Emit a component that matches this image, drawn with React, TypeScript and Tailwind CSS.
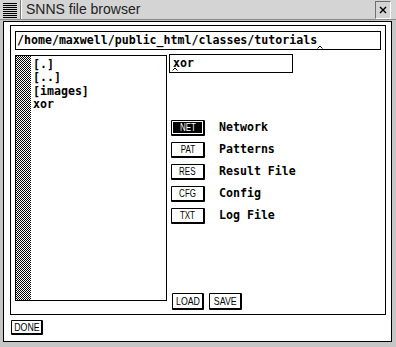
import React from "react";

const MONO = { fontFamily: "'DejaVu Sans Mono', 'Liberation Mono', monospace" };
const SANS = { fontFamily: "'Liberation Sans', Arial, sans-serif" };

const FILES = ["[.]", "[..]", "[images]", "xor"];

const TYPES = [
  { tag: "NET", label: "Network", active: true },
  { tag: "PAT", label: "Patterns" },
  { tag: "RES", label: "Result File" },
  { tag: "CFG", label: "Config" },
  { tag: "TXT", label: "Log File" },
];

function Caret() {
  return (
    <svg width="6" height="4" viewBox="0 0 6 4" className="block">
      <polyline points="0.5,3.5 3,1 5.5,3.5" fill="none" stroke="#000" strokeWidth="1" />
    </svg>
  );
}

// 50% stipple used by the Athena scrollbar
function Stipple() {
  return (
    <svg width="15" height="244" className="block" shapeRendering="crispEdges">
      <defs>
        <pattern id="stip" width="2" height="2" patternUnits="userSpaceOnUse">
          <rect x="0" y="0" width="2" height="2" fill="#fff" />
          <rect x="0" y="0" width="1" height="1" fill="#000" />
          <rect x="1" y="1" width="1" height="1" fill="#000" />
        </pattern>
      </defs>
      <rect width="15" height="244" fill="url(#stip)" />
    </svg>
  );
}

function SmallButton({
  children,
  w,
  h,
  active,
  size = "text-[11px]",
}: {
  children: React.ReactNode;
  w: string;
  h: string;
  active?: boolean;
  size?: string;
}) {
  return (
    <div
      className={`${w} ${h} flex items-center justify-center border-l border-t border-r-2 border-b-2 border-black rounded-[1px] ${
        active ? "bg-black text-white shadow-[inset_0_0_0_1px_#fff]" : "bg-white text-black"
      }`}
    >
      <span className={`inline-block scale-x-[0.8] ${size} leading-none`} style={SANS}>
        {children}
      </span>
    </div>
  );
}

export default function App() {
  return (
    <div className="w-[396px] h-[347px] bg-[#c6c6c6] flex flex-col overflow-hidden select-none">
      {/* title bar */}
      <div className="h-[20px] flex items-stretch bg-[#d4d4d4] border-b border-[#8a8a8a]">
        <div className="w-[22px] flex items-start pl-[3px] pt-[3px] border-r border-white shadow-[inset_-1px_0_0_#7a7a7a]">
          <svg width="14" height="16" viewBox="0 0 14 16" className="block">
            {[0, 2, 4, 6, 8, 10, 12, 14].map((y) => (
              <line key={y} x1="0" x2="14" y1={y + 0.5} y2={y + 0.5} stroke="#000" strokeWidth="1" />
            ))}
          </svg>
        </div>
        <div className="flex-1 pl-[4px] text-[14px] leading-[19px] text-[#222]" style={SANS}>
          SNNS file browser
        </div>
        <div className="w-[16px] h-[18px] mt-[1px] mr-[5px] flex items-center justify-center bg-[#d4d4d4] border-l border-t border-[#6e6e6e] border-r border-b border-r-white border-b-white">
          <svg width="8" height="8" viewBox="0 0 8 8" className="block">
            <path d="M1 1 L7 7 M7 1 L1 7" stroke="#000" strokeWidth="1.4" />
          </svg>
        </div>
      </div>

      {/* window body */}
      <div className="flex-1 flex pl-[3px] pr-[4px] pb-[5px] pt-[1px]">
        <div className="flex-1 border border-black bg-white flex flex-col pl-[6px] pr-[5px] pt-[3px]">
          <div className="h-[290px] border border-black flex flex-col px-[4px] pt-[5px]">
            {/* path field */}
            <div className="h-[19px] border border-black flex items-center pl-[1px] text-[11.6px] font-bold leading-none" style={MONO}>
              <span>/home/maxwell/public_html/classes/tutorials</span>
              <span className="self-end">
                <Caret />
              </span>
            </div>

            <div className="flex mt-[5px]">
              {/* file list */}
              <div className="w-[152px] h-[246px] border border-black flex">
                <Stipple />
                <div className="pl-[2px] pt-[2px] text-[11.6px] font-bold leading-[13.3px]" style={MONO}>
                  {FILES.map((f) => (
                    <div key={f}>{f}</div>
                  ))}
                </div>
              </div>

              {/* right side */}
              <div className="flex flex-col -mt-px">
                <div className="relative ml-[2px] w-[124px] h-[19px] border border-black flex items-center pl-[3px] text-[11.6px] font-bold leading-none" style={MONO}>
                  xor
                  <span className="absolute left-[2px] bottom-[1px]">
                    <Caret />
                  </span>
                </div>

                <div className="flex flex-col gap-[6px] mt-[47px] ml-[4px]">
                  {TYPES.map((t) => (
                    <div key={t.tag} className="flex items-center">
                      <SmallButton w="w-[34px]" h="h-[16px]" active={t.active} size="text-[10px]">
                        {t.tag}
                      </SmallButton>
                      <span className="ml-[14px] text-[11.6px] font-bold leading-none" style={MONO}>
                        {t.label}
                      </span>
                    </div>
                  ))}
                </div>

                <div className="flex gap-[5px] mt-[69px] ml-[5px]">
                  <SmallButton w="w-[32px]" h="h-[17px]">LOAD</SmallButton>
                  <SmallButton w="w-[33px]" h="h-[17px]">SAVE</SmallButton>
                </div>
              </div>
            </div>
          </div>

          <div className="mt-[5px] ml-[1px]">
            <SmallButton w="w-[32px]" h="h-[15px]">DONE</SmallButton>
          </div>
        </div>
      </div>
    </div>
  );
}
